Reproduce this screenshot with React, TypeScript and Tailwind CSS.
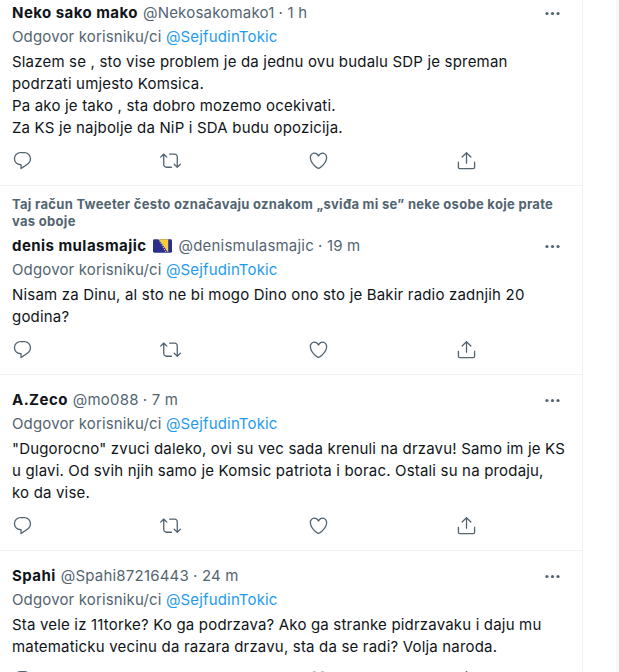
import React from "react";

const actionIcons = {
  reply: "M14.046 2.242l-4.148-.01h-.002c-4.374 0-7.8 3.427-7.8 7.802 0 4.098 3.186 7.206 7.465 7.37v3.828c0 .108.044.286.12.403.142.225.384.347.632.347.138 0 .277-.038.402-.118.264-.168 6.473-4.14 8.088-5.506 1.902-1.61 3.04-3.97 3.043-6.312v-.017c-.006-4.367-3.43-7.787-7.8-7.788zm3.787 12.972c-1.134.96-4.862 3.405-6.772 4.643V16.67c0-.414-.335-.75-.75-.75h-.396c-3.66 0-6.318-2.476-6.318-5.886 0-3.534 2.768-6.302 6.3-6.302l4.147.01h.002c3.532 0 6.3 2.766 6.302 6.296-.003 1.91-.942 3.844-2.514 5.176z",
  retweet: "M23.77 15.67c-.292-.293-.767-.293-1.06 0l-2.22 2.22V7.65c0-2.068-1.683-3.75-3.75-3.75h-5.85c-.414 0-.75.336-.75.75s.336.75.75.75h5.85c1.24 0 2.25 1.01 2.25 2.25v10.24l-2.22-2.22c-.293-.293-.768-.293-1.06 0s-.294.768 0 1.06l3.5 3.5c.145.147.337.22.53.22s.383-.072.53-.22l3.5-3.5c.294-.292.294-.767 0-1.06zm-10.66 3.28H7.26c-1.24 0-2.25-1.01-2.25-2.25V6.46l2.22 2.22c.148.147.34.22.532.22s.384-.073.53-.22c.293-.293.293-.768 0-1.06l-3.5-3.5c-.293-.294-.768-.294-1.06 0l-3.5 3.5c-.294.292-.294.767 0 1.06s.767.293 1.06 0l2.22-2.22V16.7c0 2.068 1.683 3.75 3.75 3.75h5.85c.414 0 .75-.336.75-.75s-.337-.75-.75-.75z",
  like: "M12 21.638h-.014C9.403 21.59 1.95 14.856 1.95 8.478c0-3.064 2.525-5.754 5.403-5.754 2.29 0 3.83 1.58 4.646 2.73.814-1.148 2.354-2.73 4.645-2.73 2.88 0 5.404 2.69 5.404 5.755 0 6.376-7.454 13.11-10.037 13.157H12zM7.354 4.225c-2.08 0-3.903 1.988-3.903 4.255 0 5.74 7.034 11.596 8.55 11.658 1.518-.062 8.55-5.917 8.55-11.658 0-2.267-1.823-4.255-3.903-4.255-2.528 0-3.94 2.936-3.952 2.965-.23.562-1.156.562-1.387 0-.014-.03-1.425-2.965-3.954-2.965z",
  share: "M17.53 7.47l-5-5c-.293-.293-.768-.293-1.06 0l-5 5c-.294.293-.294.768 0 1.06s.767.294 1.06 0l3.72-3.72V15c0 .414.336.75.75.75s.75-.336.75-.75V4.81l3.72 3.72c.146.147.338.22.53.22s.384-.072.53-.22c.293-.293.293-.767 0-1.06zM19.708 21.944H4.292C3.028 21.944 2 20.916 2 19.652V14c0-.414.336-.75.75-.75s.75.336.75.75v5.652c0 .437.355.792.792.792h15.416c.437 0 .792-.355.792-.792V14c0-.414.336-.75.75-.75s.75.336.75.75v5.652c0 1.264-1.028 2.292-2.292 2.292z",
};

function ActionIcon({ d }: { d: string }) {
  return (
    <svg viewBox="0 0 24 24" className="w-[21px] h-[21px] fill-[#536471]">
      <path d={d} />
    </svg>
  );
}

function BosniaFlag() {
  return (
    <svg viewBox="0 0 20 14" className="w-[19px] h-[14px] ml-[6px] mr-[2px]">
      <rect width="20" height="14" rx="1.5" fill="#2b2f8c" />
      <path d="M6 0h10v14z" fill="#f7cf3d" />
      <path d="M6 0l8 14" stroke="#fff" strokeWidth="1" strokeDasharray="1 1.4" />
    </svg>
  );
}

interface TweetProps {
  name: string;
  handle: string;
  time: string;
  flag?: boolean;
  context?: string[];
  lines: string[];
  height: string;
}

function Tweet({ name, handle, time, flag, context, lines, height }: TweetProps) {
  return (
    <div className={`px-3 border-b border-[#eff3f4] ${height}`}>
      {context && (
        <div className="pt-[10px] pb-[4px] text-[13px] leading-[17px] font-bold tracking-[0.3px] text-[#536471]">
          {context.map((c) => (
            <div key={c}>{c}</div>
          ))}
        </div>
      )}
      <div className="flex items-center justify-between h-[24px]">
        <div className="flex items-center text-[15px] text-[#536471] whitespace-nowrap">
          <span className="font-bold text-[#0f1419] tracking-[0.45px]">{name}</span>
          {flag && <BosniaFlag />}
          <span className="ml-[5px] tracking-[0.2px]">{handle}</span>
          <span className="ml-1 tracking-[0.2px]">· {time}</span>
        </div>
        <svg viewBox="0 0 24 24" className="w-[19px] h-[19px] fill-[#536471] mr-[8px]">
          <circle cx="5" cy="12" r="2" />
          <circle cx="12" cy="12" r="2" />
          <circle cx="19" cy="12" r="2" />
        </svg>
      </div>
      <div className="h-[24px] leading-[24px] text-[15px] tracking-[0.15px] text-[#536471]">
        Odgovor korisniku/ci <span className="text-[#1d9bf0]">@SejfudinTokic</span>
      </div>
      <div className="mt-[2px] text-[15px] leading-[22px] tracking-[0.18px] text-[#0f1419]">
        {lines.map((l) => (
          <div key={l} className="whitespace-nowrap">{l}</div>
        ))}
      </div>
      <div className="mt-[11px] flex items-center w-[465px] justify-between">
        <ActionIcon d={actionIcons.reply} />
        <ActionIcon d={actionIcons.retweet} />
        <ActionIcon d={actionIcons.like} />
        <ActionIcon d={actionIcons.share} />
      </div>
    </div>
  );
}

export default function App() {
  return (
    <div className="h-[672px] overflow-hidden bg-white flex font-['Inter','Open_Sans',sans-serif]">
      <div className="w-[583px] border-r border-[#eff3f4] shrink-0">
        <Tweet
          name="Neko sako mako"
          handle="@Nekosakomako1"
          time="1 h"
          lines={[
            "Slazem se , sto vise problem je da jednu ovu budalu SDP je spreman",
            "podrzati umjesto Komsica.",
            "Pa ako je tako , sta dobro mozemo ocekivati.",
            "Za KS je najbolje da NiP i SDA budu opozicija.",
          ]}
          height="h-[186px] pt-[1px]"
        />
        <Tweet
          name="denis mulasmajic"
          handle="@denismulasmajic"
          time="19 m"
          flag
          context={[
            "Taj račun Tweeter često označavaju oznakom „sviđa mi se” neke osobe koje prate",
            "vas oboje",
          ]}
          lines={[
            "Nisam za Dinu, al sto ne bi mogo Dino ono sto je Bakir radio zadnjih 20",
            "godina?",
          ]}
          height="h-[189px]"
        />
        <Tweet
          name="A.Zeco"
          handle="@mo088"
          time="7 m"
          lines={[
            '"Dugorocno" zvuci daleko, ovi su vec sada krenuli na drzavu! Samo im je KS',
            "u glavi. Od svih njih samo je Komsic patriota i borac. Ostali su na prodaju,",
            "ko da vise.",
          ]}
          height="h-[176px] pt-[13px]"
        />
        <Tweet
          name="Spahi"
          handle="@Spahi87216443"
          time="24 m"
          lines={[
            "Sta vele iz 11torke? Ko ga podrzava? Ako ga stranke pidrzavaku i daju mu",
            "matematicku vecinu da razara drzavu, sta da se radi? Volja naroda.",
          ]}
          height="pt-[13px]"
        />
      </div>
      <div className="flex-1" />
      <div className="w-[3px] bg-[#f7f9f9]" />
    </div>
  );
}
